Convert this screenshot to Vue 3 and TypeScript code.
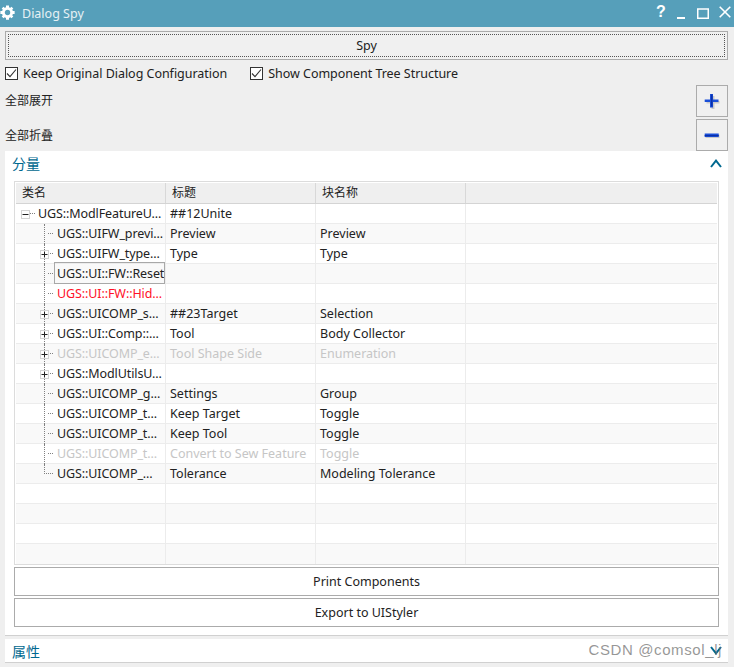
<script setup lang="ts">
interface Row { name: string; title: string; block: string; level: number; toggle?: '+' | '-'; tone?: 'red' | 'muted'; focus?: boolean; last?: boolean }
const rows: Row[] = [
  { name: 'UGS::ModlFeatureU...', title: '##12Unite', block: '', level: 0, toggle: '-' },
  { name: 'UGS::UIFW_previ...', title: 'Preview', block: 'Preview', level: 1 },
  { name: 'UGS::UIFW_type...', title: 'Type', block: 'Type', level: 1, toggle: '+' },
  { name: 'UGS::UI::FW::Reset', title: '', block: '', level: 1, focus: true },
  { name: 'UGS::UI::FW::Hid...', title: '', block: '', level: 1, tone: 'red' },
  { name: 'UGS::UICOMP_s...', title: '##23Target', block: 'Selection', level: 1, toggle: '+' },
  { name: 'UGS::UI::Comp::...', title: 'Tool', block: 'Body Collector', level: 1, toggle: '+' },
  { name: 'UGS::UICOMP_e...', title: 'Tool Shape Side', block: 'Enumeration', level: 1, toggle: '+', tone: 'muted' },
  { name: 'UGS::ModlUtilsU...', title: '', block: '', level: 1, toggle: '+' },
  { name: 'UGS::UICOMP_g...', title: 'Settings', block: 'Group', level: 1 },
  { name: 'UGS::UICOMP_t...', title: 'Keep Target', block: 'Toggle', level: 1 },
  { name: 'UGS::UICOMP_t...', title: 'Keep Tool', block: 'Toggle', level: 1 },
  { name: 'UGS::UICOMP_t...', title: 'Convert to Sew Feature', block: 'Toggle', level: 1, tone: 'muted' },
  { name: 'UGS::UICOMP_...', title: 'Tolerance', block: 'Modeling Tolerance', level: 1, last: true },
  { name: '', title: '', block: '', level: -1 },
  { name: '', title: '', block: '', level: -1 },
  { name: '', title: '', block: '', level: -1 },
  { name: '', title: '', block: '', level: -1 },
]
</script>

<template>
  <div class="dialog">
    <header class="titlebar">
      <svg class="gear" width="15" height="15" viewBox="0 0 16 16">
        <circle cx="8" cy="8" r="4.4" fill="none" stroke="#fff" stroke-width="3" />
        <path d="M6.4 0.4h3.2v2.8h-3.2zM6.4 12.8h3.2v2.8h-3.2zM0.4 6.4h2.8v3.2h-2.8zM12.8 6.4h2.8v3.2h-2.8zM1.8 3.8l2-2 2 2-2 2zM10.2 12.2l2-2 2 2-2 2zM12.2 1.8l2 2-2 2-2-2zM3.8 10.2l2 2-2 2-2-2z" fill="#fff" />
      </svg>
      <span class="title">Dialog Spy</span>
      <div class="win-controls">
        <span class="help">?</span>
        <svg width="8" height="3" viewBox="0 0 8 3" class="wc-min"><rect width="8" height="2" y="1" fill="#fff" /></svg>
        <svg width="12" height="11" viewBox="0 0 12 11" class="wc-max"><rect x="0.75" y="1" width="10.5" height="9.25" fill="none" stroke="#fff" stroke-width="1.5" /></svg>
        <svg width="12" height="12" viewBox="0 0 12 12" class="wc-close"><path d="M0.7 0.7l10.6 10.6M11.3 0.7L0.7 11.3" stroke="#fff" stroke-width="1.6" fill="none" /></svg>
      </div>
    </header>

    <main class="content">
      <button class="btn spy"><span class="focus-ring">Spy</span></button>

      <div class="checks">
        <label class="check check-a">
          <span class="box"><svg width="11" height="11" viewBox="0 0 11 11"><path d="M1 5.5l3 3.2 6-7.2" fill="none" stroke="#333" stroke-width="1.1" /></svg></span>
          Keep Original Dialog Configuration
        </label>
        <label class="check">
          <span class="box"><svg width="11" height="11" viewBox="0 0 11 11"><path d="M1 5.5l3 3.2 6-7.2" fill="none" stroke="#333" stroke-width="1.1" /></svg></span>
          Show Component Tree Structure
        </label>
      </div>

      <div class="action-row">
        <span class="action-label up">全部展开</span>
        <button class="icon-btn" aria-label="expand">
          <svg width="16" height="16" viewBox="0 0 16 16">
            <path d="M6.5 2h3v5h5v2.6h-5V15h-3V9.6h-5V7h5z" fill="#c9c9c9" transform="translate(1 1)" />
            <path d="M6 1h3v5.5h5.5v2.6H9V14.5H6V9.1H.7V6.5H6z" fill="#1a4fd8" />
            <path d="M7 1.5h1.4V13.5H7z" fill="#0b2fa8" />
          </svg>
        </button>
      </div>
      <div class="action-row collapse-row">
        <span class="action-label">全部折叠</span>
        <button class="icon-btn" aria-label="collapse">
          <svg width="16" height="16" viewBox="0 0 16 16">
            <rect x="1.5" y="7.5" width="14" height="3.5" fill="#c9c9c9" />
            <rect x=".7" y="6.5" width="14" height="3.5" fill="#1a4fd8" />
            <rect x=".7" y="8" width="14" height="1.2" fill="#0b2fa8" />
          </svg>
        </button>
      </div>

      <section class="panel">
        <div class="panel-head">
          <span class="panel-title">分量</span>
          <svg width="12" height="9" viewBox="0 0 12 9"><path d="M1 8l5-6.4L11 8" fill="none" stroke="#00688f" stroke-width="2" /></svg>
        </div>
        <div class="panel-body">
          <div class="grid">
            <div class="grid-row head">
              <div class="cell">类名</div><div class="cell">标题</div><div class="cell">块名称</div><div class="cell"></div>
            </div>
            <div v-for="(r, i) in rows" :key="i" class="grid-row" :class="{ alt: i % 2 === 1, red: r.tone === 'red', muted: r.tone === 'muted' }">
              <div class="cell name" :class="'lv' + r.level">
                <i v-if="r.level === 1" class="vline" :class="{ end: r.last }"></i>
                <i v-if="r.level >= 0" class="hline" :class="{ full: r.last }"></i>
                <span v-if="r.toggle" class="toggle">
                  <svg width="7" height="7" viewBox="0 0 7 7"><path :d="r.toggle === '+' ? 'M.5 3.5h6M3.5 .5v6' : 'M.5 3.5h6'" stroke="#222" stroke-width="1" fill="none" /></svg>
                </span>
                <span class="label" :class="{ focused: r.focus }">{{ r.name }}</span>
              </div>
              <div class="cell">{{ r.title }}</div>
              <div class="cell">{{ r.block }}</div>
              <div class="cell"></div>
            </div>
          </div>
          <button class="btn wide">Print Components</button>
          <button class="btn wide">Export to UIStyler</button>
        </div>
      </section>

      <section class="panel props">
        <span class="panel-title">属性</span>
        <svg width="12" height="9" viewBox="0 0 12 9"><path d="M1 1l5 6.4L11 1" fill="none" stroke="#00688f" stroke-width="2" /></svg>
      </section>
      <span class="watermark">CSDN @comsol_lj</span>
    </main>
  </div>
</template>

<style scoped>
.dialog { width: 734px; height: 667px; overflow: hidden; background: #efefef; font-family: "Noto Sans", "Noto Sans CJK SC", sans-serif; font-size: 12.5px; color: #222; display: flex; flex-direction: column; position: relative; }
.titlebar { height: 27px; background: #569fba; color: #fff; display: flex; align-items: center; padding: 0 3px 0 0; flex: none; }
.gear { margin-left: 0; margin-top: -2px; }
.title { margin-left: 7px; font-size: 12.5px; color: #e6f1f5; }
.win-controls { margin-left: auto; display: flex; align-items: center; }
.help { font-weight: 700; font-size: 16px; width: 10px; line-height: 16px; margin-right: 11px; margin-top: -4px; font-family: "Liberation Sans", sans-serif; }
.wc-min { margin-top: 8px; margin-right: 12px; }
.wc-max { margin-top: -1px; margin-right: 10px; }
.wc-close { margin-top: -3px; }
.content { flex: 1; padding: 4px 6px 0 5px; display: flex; flex-direction: column; }
.btn { font: inherit; color: #222; background: #f0f0f0; border: 1px solid #ababab; display: block; padding: 0; }
.spy { height: 29px; padding: 2px; width: 100%; flex: none; }
.focus-ring { display: flex; height: 100%; align-items: center; justify-content: center; border: 1px dotted #555; box-sizing: border-box; }
.checks { display: flex; height: 25px; align-items: center; padding-top: 1px; box-sizing: border-box; flex: none; }
.check { display: flex; align-items: center; gap: 5px; letter-spacing: -0.03px; }
.check-a { margin-right: 23px; }
.box { width: 13px; height: 13px; border: 1px solid #333; background: #fff; display: flex; align-items: center; justify-content: center; box-sizing: border-box; }
.action-row { height: 32px; display: flex; justify-content: space-between; align-items: center; flex: none; }
.action-label { font-size: 12px; }
.up { margin-top: -2px; }
.collapse-row { margin-top: 2px; }
.icon-btn { width: 32px; height: 32px; background: #f0f0f0; border: 1px solid #ababab; padding: 0; display: flex; align-items: center; justify-content: center; }
.panel { background: #fff; flex: none; }
.panel-head { height: 30px; display: flex; justify-content: space-between; align-items: center; padding: 0 6px 6px 7px; box-sizing: border-box; }
.panel-title { color: #00688f; font-size: 14px; }
.panel-body { padding: 0 9px 6px; display: flex; flex-direction: column; border-bottom: 1px solid #d0d0d0; height: 455px; box-sizing: border-box; }
.grid { border: 1px solid #dcdcdc; padding: 1px 1px 0 1px; height: 384px; margin-bottom: 2px; box-sizing: border-box; overflow: hidden; flex: none; }
.grid-row { height: 20px; display: grid; grid-template-columns: 150px 150px 150px 1fr; border-bottom: 1px solid #ececec; box-sizing: border-box; }
.grid-row:last-child { border-bottom: 0; }
.grid-row.alt { background: #f9f9f9; }
.grid-row.head { height: 21px; background: #efefef; border-bottom: 1px solid #d4d4d4; font-size: 12px; }
.head .cell { padding-left: 6px; border-right-color: #d8d8d8; }
.cell { position: relative; padding-left: 4px; border-right: 1px solid #ececec; white-space: nowrap; line-height: 19px; min-width: 0; color: inherit; }
.cell:last-child { border-right: 0; }
.red .name { color: #ff1028; }
.muted { color: #c6c6c6; }
.name { padding-left: 0; letter-spacing: -0.1px; }
.lv0 .label { margin-left: 21px; }
.lv1 .label { margin-left: 40px; }
.label { display: inline-block; padding: 0 1px; height: 19px; position: relative; }
.focused::before { content: ""; position: absolute; left: -2px; top: -2px; width: 111px; height: 22px; border: 1px solid #a8a8a8; box-sizing: border-box; }
.vline { position: absolute; left: 28px; top: 0; bottom: -1px; border-left: 1px dotted #808080; }
.vline.end { bottom: 9px; }
.hline { position: absolute; left: 32px; width: 5px; top: 9px; border-top: 1px dotted #808080; }
.hline.full { left: 28px; width: 9px; }
.lv0 .hline { left: 14px; width: 5px; }
.toggle { position: absolute; left: 24px; top: 6px; width: 7px; height: 7px; background: #fff; border: 1px solid #d4d4d4; box-sizing: content-box; display: flex; align-items: center; justify-content: center; }
.lv0 .toggle { left: 5px; }
.wide { height: 29px; background: #fff; margin-bottom: 2px; text-align: center; width: 100%; flex: none; }
.wide:last-child { margin-bottom: 0; }
.props { margin-top: 3px; height: 24px; display: flex; justify-content: space-between; align-items: center; padding: 0 6px 0 7px; border-bottom: 1px solid #d0d0d0; box-sizing: border-box; }
.watermark { position: absolute; right: 12px; bottom: 9px; color: rgba(110, 110, 110, .72); font-size: 15px; font-family: "Liberation Sans", sans-serif; letter-spacing: .6px; }
</style>
